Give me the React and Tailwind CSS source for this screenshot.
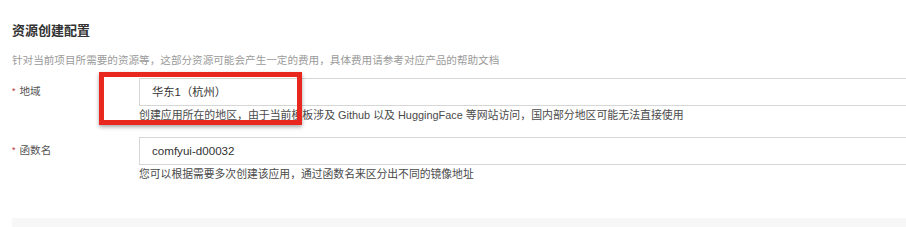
export default function App() {
  const font = { fontFamily: '"Liberation Sans", "Noto Sans CJK SC", sans-serif' };
  return (
    <div
      className="relative w-[906px] h-[227px] overflow-hidden bg-white text-[#333]"
      style={font}
    >
      <div className="pl-[12px] pt-[22px]">
        {/* Section header */}
        <h2 className="text-[13px] leading-[17px] font-semibold text-[#333]">资源创建配置</h2>
        <p className="mt-[13px] text-[10.6px] leading-[16px] text-[#9a9a9a]">
          针对当前项目所需要的资源等，这部分资源可能会产生一定的费用，具体费用请参考对应产品的帮助文档
        </p>

        {/* Region */}
        <div className="mt-[10px] flex">
          <div className="w-[127px] shrink-0 h-[28px] flex items-center text-[10.6px] text-[#555]">
            <span className="text-[#b33] mr-[4px] text-[9px]">*</span>
            地域
          </div>
          <div className="shrink-0">
            <div className="w-[800px] h-[28px] border border-[#d6d6d6] flex items-center pl-[12px] text-[11.3px] text-[#333]">
              华东1（杭州）
            </div>
            <p className="mt-[1px] text-[10.9px] leading-[16px] text-[#4a4a4a]">
              创建应用所在的地区，由于当前模板涉及 Github 以及 HuggingFace 等网站访问，国内部分地区可能无法直接使用
            </p>
          </div>
        </div>

        {/* Function name */}
        <div className="mt-[14px] flex">
          <div className="w-[127px] shrink-0 h-[28px] flex items-center text-[10.6px] text-[#555]">
            <span className="text-[#b33] mr-[4px] text-[9px]">*</span>
            函数名
          </div>
          <div className="shrink-0">
            <div className="w-[800px] h-[28px] border border-[#d6d6d6] flex items-center pl-[12px] text-[11.6px] text-[#333]">
              comfyui-d00032
            </div>
            <p className="mt-[1px] text-[10.8px] leading-[16px] text-[#4a4a4a]">
              您可以根据需要多次创建该应用，通过函数名来区分出不同的镜像地址
            </p>
          </div>
        </div>

        <div className="mt-[36px] h-[20px] bg-[#f7f7f7]" />
      </div>

      {/* Highlight annotation */}
      <div className="absolute left-[99px] top-[72px] w-[203px] h-[53px] border-[5px] border-[#e8281e] shadow-[0_2px_4px_rgba(0,0,0,0.35)]" />
    </div>
  );
}
